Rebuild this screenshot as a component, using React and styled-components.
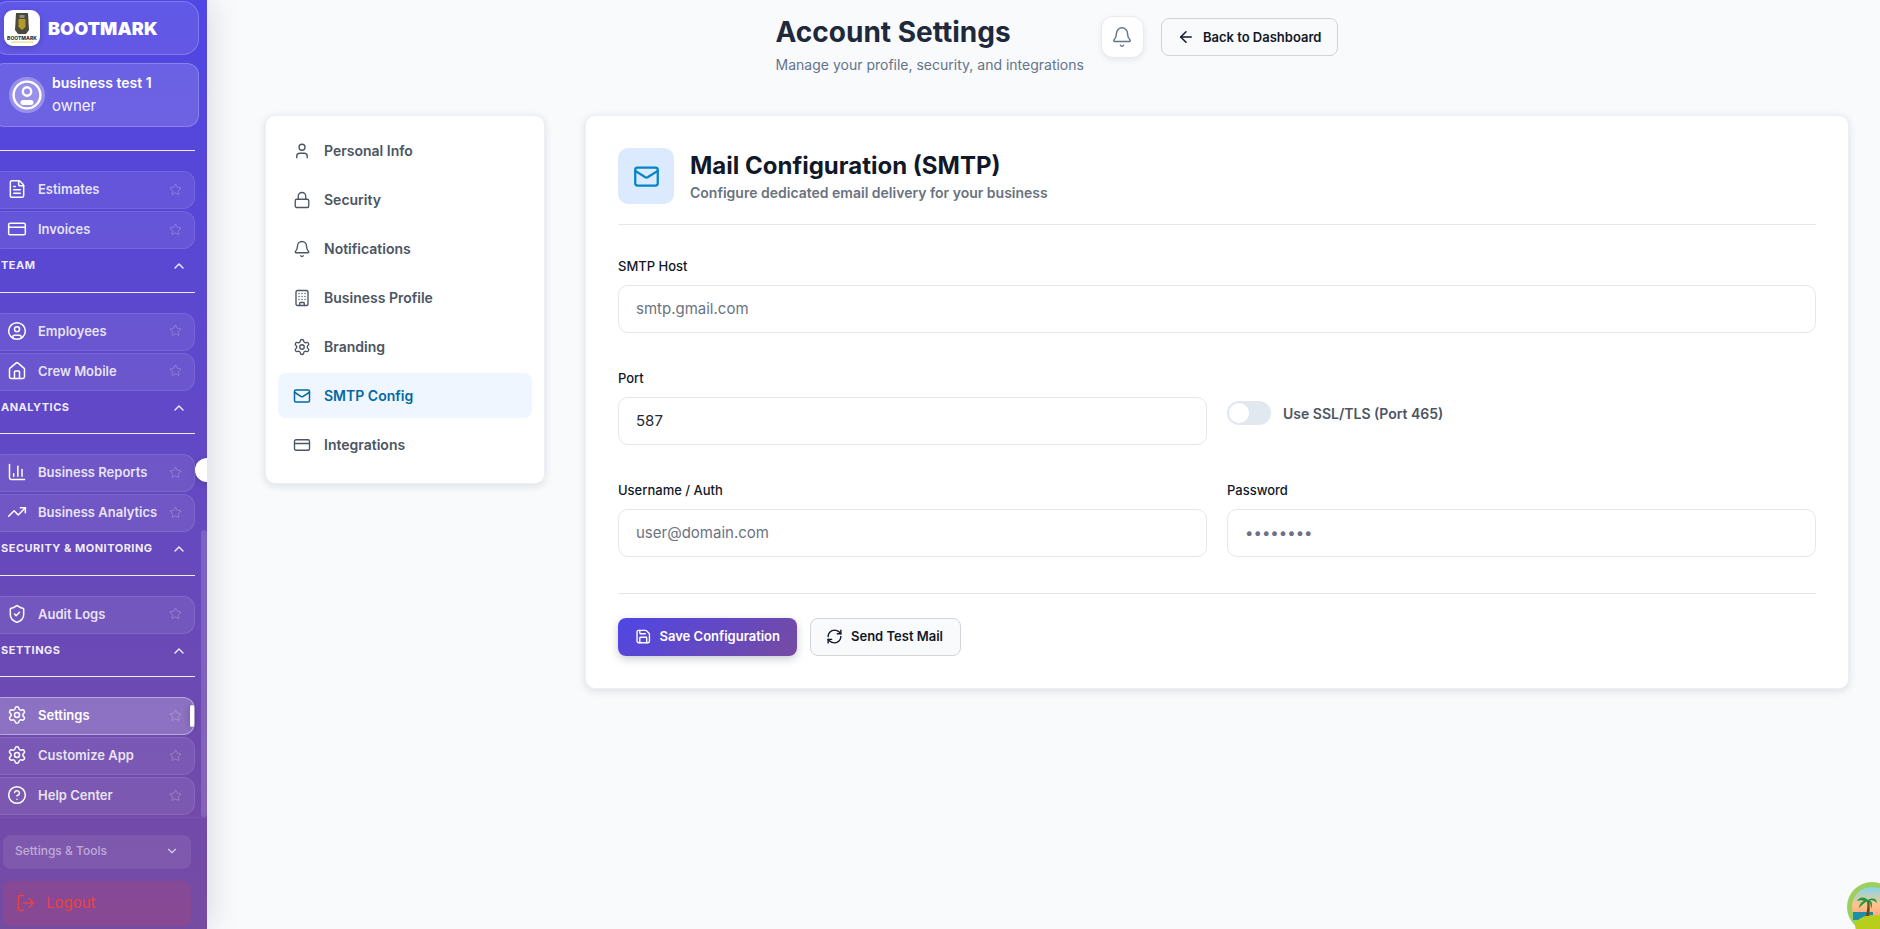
import styled, { createGlobalStyle } from 'styled-components';
import {
  ArrowLeft,
  Bell,
  Building,
  ChartColumn,
  ChevronDown,
  ChevronUp,
  CircleHelp,
  CircleUser,
  CreditCard,
  FileText,
  House,
  Lock,
  LogOut,
  Mail,
  RefreshCw,
  Save,
  Settings,
  ShieldCheck,
  Star,
  TrendingUp,
  User,
} from 'lucide-react';

const GlobalStyle = createGlobalStyle`
  html, body, #root {
    height: 100%;
    margin: 0;
  }
  body {
    overflow: hidden;
    background: #f8fafc;
    font-family: Inter, 'Liberation Sans', sans-serif;
  }
  * {
    box-sizing: border-box;
  }
`;

const Page = styled.div`
  display: flex;
  height: 100vh;
`;

const Sidebar = styled.aside`
  position: relative;
  z-index: 2;
  display: flex;
  flex-direction: column;
  flex: 0 0 207px;
  width: 207px;
  height: 100%;
  overflow: hidden;
  background: linear-gradient(180deg, #4f46e5 0%, #764ba2 100%);
  box-shadow: 2px 0 32px rgba(15, 23, 42, 0.14);
  color: #fff;
`;

const BrandCard = styled.div`
  display: flex;
  align-items: center;
  gap: 8px;
  flex: none;
  height: 54px;
  margin: 1px 8px 0 -8px;
  padding-left: 11px;
  border: 1px solid rgba(255, 255, 255, 0.2);
  border-radius: 16px;
  background: rgba(255, 255, 255, 0.1);
`;

const LogoBox = styled.div`
  display: flex;
  align-items: center;
  justify-content: center;
  width: 36px;
  height: 36px;
  border-radius: 9px;
  background: #fff;
  box-shadow: 0 2px 6px rgba(0, 0, 0, 0.18);
`;

const BrandName = styled.span`
  font-size: 18px;
  font-weight: 900;
  letter-spacing: 0.1px;
`;

const UserCard = styled.div`
  display: flex;
  align-items: center;
  gap: 7px;
  flex: none;
  height: 64px;
  margin: 8px 8px 0 -8px;
  padding-left: 16px;
  border: 1px solid rgba(255, 255, 255, 0.2);
  border-radius: 12px;
  background: rgba(255, 255, 255, 0.15);
`;

const Avatar = styled.div`
  display: flex;
  align-items: center;
  justify-content: center;
  width: 36px;
  height: 36px;
  border-radius: 50%;
  background: rgba(255, 255, 255, 0.3);
`;

const UserText = styled.div`
  display: flex;
  flex-direction: column;
  gap: 6px;
  margin-top: -2px;
  font-size: 14px;
  line-height: 17px;
`;

const UserName = styled.span`
  font-weight: 600;
`;

const UserRole = styled.span`
  font-size: 15px;
  font-weight: 400;
  color: rgba(255, 255, 255, 0.95);
`;

const Nav = styled.nav`
  position: relative;
  flex: 1;
  min-height: 0;
  padding-top: 23px;
`;

const ScrollThumb = styled.div`
  position: absolute;
  top: 403px;
  right: 0;
  bottom: 0;
  width: 6px;
  border-radius: 3px;
  background: rgba(255, 255, 255, 0.14);
`;

const Knob = styled.div`
  position: absolute;
  top: 458px;
  right: -12px;
  width: 24px;
  height: 24px;
  border-radius: 50%;
  background: #fff;
  box-shadow: 0 2px 6px rgba(0, 0, 0, 0.15);
`;

const SectionHead = styled.div`
  display: flex;
  align-items: flex-start;
  justify-content: space-between;
  height: 42.5px;
  width: 195px;
  padding: 9px 8px 0 1px;
  font-size: 11px;
  font-weight: 700;
  line-height: 14px;
  letter-spacing: 0.5px;
  color: rgba(255, 255, 255, 0.92);
`;

const NavRule = styled.div`
  width: 195px;
  height: 1px;
  background: rgba(255, 255, 255, 0.9);
`;

const ItemList = styled.ul`
  display: flex;
  flex-direction: column;
  gap: 2px;
  margin: 20px 0 0;
  padding: 0;
  list-style: none;
`;

const NavItem = styled.li`
  position: relative;
  display: flex;
  align-items: center;
  width: 205px;
  height: 38px;
  margin-left: -10px;
  padding: 0 12px 2px 16px;
  border: 1px solid ${(props) => (props.$active ? 'rgba(255, 255, 255, 0.4)' : 'rgba(255, 255, 255, 0.1)')};
  border-radius: 12px;
  background: ${(props) => (props.$active ? 'rgba(255, 255, 255, 0.22)' : 'rgba(255, 255, 255, 0.08)')};
  font-size: 13px;
  font-weight: 600;
  color: ${(props) => (props.$active ? '#fff' : 'rgba(255, 255, 255, 0.85)')};
`;

const NavIconSlot = styled.span`
  display: flex;
  justify-content: center;
  flex: none;
  width: 20px;
  margin-right: 11px;
  color: #fff;
`;

const NavLabel = styled.span`
  flex: 1;
  white-space: nowrap;
`;

const ActiveBar = styled.span`
  position: absolute;
  top: 7px;
  right: 0;
  width: 4px;
  height: 22px;
  border-radius: 2px;
  background: #fff;
  box-shadow: 0 0 6px rgba(0, 0, 0, 0.25);
`;

const SideFooter = styled.div`
  flex: none;
  height: 112px;
  padding: 17px 16px 0 3px;
  border-top: 1px solid rgba(255, 255, 255, 0.05);
`;

const ToolsButton = styled.div`
  display: flex;
  align-items: center;
  justify-content: space-between;
  height: 34px;
  padding: 0 12px 3px 12px;
  border-radius: 8px;
  background: rgba(255, 255, 255, 0.08);
  font-size: 12px;
  font-weight: 500;
  color: rgba(255, 255, 255, 0.5);
`;

const LogoutButton = styled.div`
  display: flex;
  align-items: center;
  gap: 10px;
  height: 45px;
  margin-top: 12px;
  padding: 0 0 2px 13px;
  border-radius: 8px;
  background: rgba(239, 68, 68, 0.15);
  font-size: 15px;
  color: #e9423f;
`;

const Main = styled.main`
  flex: 1;
  min-width: 0;
  padding: 0 31px 0 58px;
`;

const Header = styled.header`
  display: flex;
  align-items: flex-start;
  justify-content: center;
  gap: 17px;
  height: 115px;
  padding-top: 16px;
`;

const TitleBlock = styled.div`
  display: flex;
  flex-direction: column;
`;

const PageTitle = styled.h1`
  margin: 0;
  font-size: 28px;
  font-weight: 700;
  line-height: 32px;
  color: #1e293b;
`;

const PageSubtitle = styled.p`
  margin: 8px 0 0;
  font-size: 14px;
  line-height: 17px;
  color: #64748b;
`;

const BellButton = styled.button`
  display: flex;
  align-items: center;
  justify-content: center;
  width: 43px;
  height: 42px;
  padding: 0;
  border: 1px solid #e8ebf0;
  border-radius: 12px;
  background: #fff;
  box-shadow: 0 2px 6px rgba(15, 23, 42, 0.08);
  color: #64748b;
`;

const BackButton = styled.button`
  display: flex;
  align-items: center;
  gap: 8px;
  height: 38px;
  margin-top: 2px;
  padding: 0 16px 0 15px;
  border: 1px solid #d1d5db;
  border-radius: 8px;
  background: #f8fafc;
  font-family: inherit;
  font-size: 13px;
  font-weight: 600;
  color: #111827;
`;

const Columns = styled.div`
  display: flex;
  align-items: flex-start;
  gap: 40px;
`;

const SideCard = styled.div`
  display: flex;
  flex-direction: column;
  gap: 4px;
  flex: 0 0 280px;
  padding: 12px 12px 16px;
  border: 1px solid #eceff3;
  border-radius: 10px;
  background: #fff;
  box-shadow: 0 2px 8px rgba(15, 23, 42, 0.12);
`;

const SideLink = styled.div`
  display: flex;
  align-items: center;
  gap: 13px;
  height: 45px;
  padding-left: 15px;
  border-radius: 8px;
  background: ${(props) => (props.$active ? '#eff6ff' : 'transparent')};
  font-size: 14px;
  font-weight: 600;
  color: ${(props) => (props.$active ? '#0369a1' : '#4b5563')};
`;

const FormCard = styled.section`
  flex: 1;
  min-width: 0;
  padding: 32px;
  border: 1px solid #eceff3;
  border-radius: 10px;
  background: #fff;
  box-shadow: 0 2px 8px rgba(15, 23, 42, 0.12);
`;

const FormHead = styled.div`
  display: flex;
  align-items: center;
  gap: 16px;
  padding-bottom: 20px;
  border-bottom: 1px solid #e5e7eb;
`;

const MailBox = styled.div`
  display: flex;
  align-items: center;
  justify-content: center;
  width: 56px;
  height: 56px;
  border-radius: 10px;
  background: #dbeafe;
  color: #0284c7;
`;

const FormTitle = styled.h2`
  margin: 0;
  font-size: 24px;
  font-weight: 700;
  line-height: 30px;
  color: #111827;
`;

const FormSubtitle = styled.p`
  margin: 3px 0 0;
  font-size: 14px;
  font-weight: 600;
  line-height: 17px;
  color: #6b7280;
`;

const FieldGrid = styled.div`
  display: grid;
  grid-template-columns: 1fr 1fr;
  column-gap: 20px;
  row-gap: 37px;
  padding: 33px 0 36px;
  border-bottom: 1px solid #e5e7eb;
`;

const Field = styled.label`
  display: flex;
  flex-direction: column;
  gap: 11px;
  grid-column: ${(props) => (props.$wide ? '1 / -1' : 'auto')};
  font-size: 13px;
  font-weight: 500;
  line-height: 16px;
  color: #111827;
`;

const TextInput = styled.input`
  width: 100%;
  height: 48px;
  padding: 0 17px 2px;
  border: 1px solid #e5e7eb;
  border-radius: 10px;
  outline: none;
  background: #fff;
  font-family: inherit;
  font-size: 15px;
  color: ${(props) => (props.type === 'password' ? '#6b7280' : '#1f2937')};
  &::placeholder {
    color: #6b7280;
  }
`;

const SwitchRow = styled.div`
  display: flex;
  align-items: flex-start;
  gap: 12px;
  padding-top: 31px;
  font-size: 14px;
  font-weight: 600;
  line-height: 26px;
  color: #4b5563;
`;

const SwitchTrack = styled.span`
  display: flex;
  align-items: center;
  width: 44px;
  height: 24px;
  padding: 2px;
  border-radius: 12px;
  background: #e2e8f0;
`;

const SwitchThumb = styled.span`
  width: 20px;
  height: 20px;
  border-radius: 50%;
  background: #fff;
`;

const Actions = styled.div`
  display: flex;
  gap: 13px;
  padding-top: 24px;
`;

const PrimaryButton = styled.button`
  display: flex;
  align-items: center;
  gap: 8px;
  width: 179px;
  height: 38px;
  padding: 0 17px 2px;
  border: 0;
  border-radius: 8px;
  background: linear-gradient(135deg, #4f46e5 0%, #764ba2 100%);
  box-shadow: 0 3px 8px rgba(15, 23, 42, 0.22);
  font-family: inherit;
  font-size: 13px;
  font-weight: 600;
  color: #fff;
  white-space: nowrap;
`;

const SecondaryButton = styled(PrimaryButton)`
  width: 151px;
  padding: 0 15px 2px;
  border: 1px solid #d1d5db;
  background: #f8fafc;
  box-shadow: none;
  color: #111827;
`;

const BeachBadge = styled.div`
  position: fixed;
  right: -17px;
  bottom: -3px;
  width: 50px;
  height: 50px;
`;

const sections = [
  { title: null, items: [{ label: 'Estimates', Icon: FileText }, { label: 'Invoices', Icon: CreditCard }] },
  { title: 'TEAM', items: [{ label: 'Employees', Icon: CircleUser }, { label: 'Crew Mobile', Icon: House }] },
  {
    title: 'ANALYTICS',
    items: [{ label: 'Business Reports', Icon: ChartColumn }, { label: 'Business Analytics', Icon: TrendingUp }],
  },
  { title: 'SECURITY & MONITORING', items: [{ label: 'Audit Logs', Icon: ShieldCheck }] },
  {
    title: 'SETTINGS',
    items: [
      { label: 'Settings', Icon: Settings, active: true },
      { label: 'Customize App', Icon: Settings },
      { label: 'Help Center', Icon: CircleHelp },
    ],
  },
];

const settingsLinks = [
  { label: 'Personal Info', Icon: User },
  { label: 'Security', Icon: Lock },
  { label: 'Notifications', Icon: Bell },
  { label: 'Business Profile', Icon: Building },
  { label: 'Branding', Icon: Settings },
  { label: 'SMTP Config', Icon: Mail, active: true },
  { label: 'Integrations', Icon: CreditCard },
];

const BootLogo = () => (
  <svg width="30" height="32" viewBox="0 0 30 32">
    <path d="M9 1h12l1 17-3 4h-8l-3-4z" fill="#4a4a3e" />
    <path d="M11.5 7h7v8l-3.5 3-3.5-3z" fill="#b59a2a" />
    <rect x="12.5" y="3" width="5" height="3" fill="#8b8f7c" />
    <text x="15" y="28" textAnchor="middle" fontSize="5" fontWeight="800" fill="#333" fontFamily="Inter, sans-serif">
      BOOTMARK
    </text>
    <rect x="4" y="29.5" width="22" height="1.2" fill="#eadc86" />
  </svg>
);

const AvatarIcon = () => (
  <svg width="30" height="30" viewBox="0 0 30 30" fill="none" stroke="#fff" strokeWidth="2.4">
    <circle cx="15" cy="15" r="13.4" />
    <circle cx="15" cy="11.5" r="4.2" />
    <rect x="8.5" y="20" width="13" height="5" rx="2.5" fill="#fff" stroke="none" />
  </svg>
);

const BeachIcon = () => (
  <svg width="50" height="50" viewBox="0 0 50 50">
    <defs>
      <linearGradient id="sky" x1="0" y1="0" x2="0" y2="1">
        <stop offset="0" stopColor="#7fd8ee" />
        <stop offset="0.45" stopColor="#ffc48a" />
        <stop offset="1" stopColor="#ff8f7a" />
      </linearGradient>
    </defs>
    <circle cx="25" cy="25" r="25" fill="#9ccf5e" />
    <circle cx="25" cy="25" r="20" fill="url(#sky)" />
    <rect x="6" y="30" width="20" height="8" fill="#1d8fa8" />
    <ellipse cx="27" cy="44" rx="19" ry="11" fill="#b7cf1a" />
    <path d="M19 34c1-6 2-10 1-15h2c1 5 1 10 0 15z" fill="#6b4a22" />
    <path d="M21 18c-4-4-9-3-11 1 3-1 5-1 7 0-3 1-5 4-5 7 3-3 6-6 9-7 2 2 3 4 3 8 2-4 1-7-1-9 3 0 5 1 7 3 0-4-4-6-9-3z" fill="#1f9a3c" />
    <path d="M33 30l7-6 2 2-6 6z" fill="#e8417a" />
  </svg>
);

const App = () => (
  <Page>
    <GlobalStyle />
    <Sidebar>
      <BrandCard>
        <LogoBox>
          <BootLogo />
        </LogoBox>
        <BrandName>BOOTMARK</BrandName>
      </BrandCard>
      <UserCard>
        <Avatar>
          <AvatarIcon />
        </Avatar>
        <UserText>
          <UserName>business test 1</UserName>
          <UserRole>owner</UserRole>
        </UserText>
      </UserCard>
      <Nav>
        <ScrollThumb />
        {sections.map((section) => (
          <div key={section.title || 'top'}>
            {section.title && (
              <SectionHead>
                {section.title}
                <ChevronUp size={16} strokeWidth={2} />
              </SectionHead>
            )}
            <NavRule />
            <ItemList>
              {section.items.map(({ label, Icon, active }) => (
                <NavItem key={label} $active={active}>
                  <NavIconSlot>
                    <Icon size={22} strokeWidth={1.8} />
                  </NavIconSlot>
                  <NavLabel>{label}</NavLabel>
                  <Star size={13} strokeWidth={1.5} color="rgba(255, 255, 255, 0.28)" />
                  {active && <ActiveBar />}
                </NavItem>
              ))}
            </ItemList>
          </div>
        ))}
      </Nav>
      <SideFooter>
        <ToolsButton>
          Settings &amp; Tools
          <ChevronDown size={14} color="rgba(255, 255, 255, 0.7)" />
        </ToolsButton>
        <LogoutButton>
          <LogOut size={20} strokeWidth={1.8} />
          Logout
        </LogoutButton>
      </SideFooter>
      <Knob />
    </Sidebar>

    <Main>
      <Header>
        <TitleBlock>
          <PageTitle>Account Settings</PageTitle>
          <PageSubtitle>Manage your profile, security, and integrations</PageSubtitle>
        </TitleBlock>
        <BellButton>
          <Bell size={22} strokeWidth={1.6} />
        </BellButton>
        <BackButton>
          <ArrowLeft size={18} strokeWidth={2} />
          Back to Dashboard
        </BackButton>
      </Header>

      <Columns>
        <SideCard>
          {settingsLinks.map(({ label, Icon, active }) => (
            <SideLink key={label} $active={active}>
              <Icon size={18} strokeWidth={active ? 2 : 1.8} />
              {label}
            </SideLink>
          ))}
        </SideCard>

        <FormCard>
          <FormHead>
            <MailBox>
              <Mail size={27} strokeWidth={2} />
            </MailBox>
            <div>
              <FormTitle>Mail Configuration (SMTP)</FormTitle>
              <FormSubtitle>Configure dedicated email delivery for your business</FormSubtitle>
            </div>
          </FormHead>
          <FieldGrid>
            <Field $wide>
              SMTP Host
              <TextInput placeholder="smtp.gmail.com" readOnly />
            </Field>
            <Field>
              Port
              <TextInput defaultValue="587" readOnly />
            </Field>
            <SwitchRow>
              <SwitchTrack>
                <SwitchThumb />
              </SwitchTrack>
              Use SSL/TLS (Port 465)
            </SwitchRow>
            <Field>
              Username / Auth
              <TextInput placeholder="user@domain.com" readOnly />
            </Field>
            <Field>
              Password
              <TextInput type="password" defaultValue="password" readOnly />
            </Field>
          </FieldGrid>
          <Actions>
            <PrimaryButton>
              <Save size={17} strokeWidth={2} />
              Save Configuration
            </PrimaryButton>
            <SecondaryButton>
              <RefreshCw size={17} strokeWidth={2} />
              Send Test Mail
            </SecondaryButton>
          </Actions>
        </FormCard>
      </Columns>
    </Main>
    <BeachBadge>
      <BeachIcon />
    </BeachBadge>
  </Page>
);

export default App;
